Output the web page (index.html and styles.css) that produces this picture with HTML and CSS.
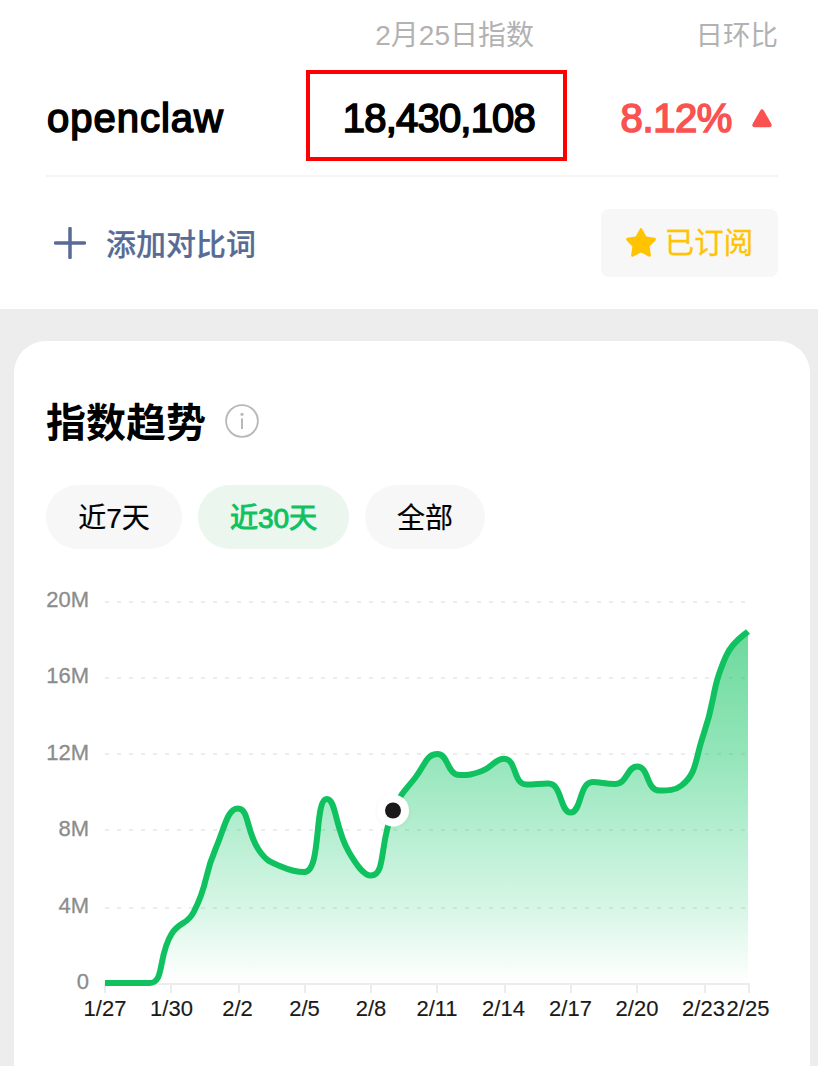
FILE: index.html
```html
<!DOCTYPE html>
<html lang="zh-CN">
<head>
<meta charset="utf-8">
<title>指数趋势</title>
<link rel="stylesheet" href="styles.css">
</head>
<body>
<section class="summary">
  <div class="row labels">
    <span></span>
    <span class="label-index">2月25日指数</span>
    <span class="label-change">日环比</span>
  </div>
  <div class="row values">
    <span class="keyword">openclaw</span>
    <span class="index-value">18,430,108</span>
    <span class="change">8.12%
      <svg class="up" viewBox="0 0 20 19"><path d="M8.1 1.7Q10-1 11.9 1.7L19.2 14.6Q20.700 18.200 17.200 18.200H2.800Q-.7 18.200.8 14.600Z"/></svg>
    </span>
  </div>
  <div class="actions">
    <a class="add">
      <svg class="plus" viewBox="0 0 32 32"><path d="M16 1.500V30.500M1.500 16H30.500"/></svg>
      <span>添加对比词</span>
    </a>
    <button class="subscribed">
      <svg class="star" viewBox="0 0 30 29"><path d="M13.700 1.200Q15-1.200 16.300 1.200L20.300 8.600 28.600 9.800Q30.900 10.400 29.300 12.400L23.600 18.600 24.900 26.900Q24.900 29.300 22.700 28.400L15 24.500 7.300 28.400Q5.100 29.300 5.100 26.900L6.400 18.600.7 12.400Q-.9 10.400 1.400 9.800L9.700 8.600Z"/></svg>
      <span>已订阅</span>
    </button>
  </div>
</section>
<main class="card">
  <div class="title-row">
    <h1>指数趋势</h1>
    <svg class="info" viewBox="0 0 34 34"><circle class="ring" cx="17" cy="17" r="15.900"/><circle class="dot" cx="17" cy="10.300" r="1.600"/><path class="stem" d="M17 14.500V25"/></svg>
  </div>
  <nav class="tabs">
    <button class="tab week">近7天</button>
    <button class="tab month active">近30天</button>
    <button class="tab all">全部</button>
  </nav>
  <svg class="chart" id="chart" viewBox="30 573 764 467">
    <defs>
      <linearGradient id="fade" gradientUnits="userSpaceOnUse" x1="0" y1="632" x2="0" y2="983">
        <stop offset="0" stop-color="#0bc05a" stop-opacity=".6"/>
        <stop offset=".35" stop-color="#0bc460" stop-opacity=".44"/>
        <stop offset=".57" stop-color="#0bc766" stop-opacity=".3"/>
        <stop offset=".79" stop-color="#0bc766" stop-opacity=".16"/>
        <stop offset="1" stop-color="#0bc766" stop-opacity="0"/>
      </linearGradient>
      <filter id="soft" x="-50%" y="-50%" width="200%" height="200%"><feDropShadow dx="0" dy="1" stdDeviation="2" flood-color="#000" flood-opacity=".05"/></filter>
    </defs>
    <g class="grid"><path d="M105 602H748M105 678H748M105 754H748M105 830H748M105 908H748"/></g>
    <path class="axis" d="M104 984H750M105 984V993M171 984V993M239 984V993M305 984V993M371 984V993M437 984V993M505 984V993M571 984V993M637 984V993M705 984V993M749 984V993"/>
    <path class="area" id="area"/>
    <path class="line" id="line"/>
    <circle cx="393" cy="810.500" r="16" fill="#fff" filter="url(#soft)"/>
    <circle cx="393" cy="810.500" r="8" fill="#1a1a1a"/>
    <g class="y-labels">
      <text x="89" y="607">20M</text><text x="89" y="683">16M</text><text x="89" y="760">12M</text>
      <text x="89" y="836">8M</text><text x="89" y="913">4M</text><text x="89" y="989">0</text>
    </g>
    <g class="x-labels">
      <text x="105" y="1016">1/27</text><text x="171.500" y="1016">1/30</text><text x="237.500" y="1016">2/2</text>
      <text x="304.500" y="1016">2/5</text><text x="371" y="1016">2/8</text><text x="437" y="1016">2/11</text>
      <text x="503.500" y="1016">2/14</text><text x="570.500" y="1016">2/17</text><text x="637" y="1016">2/20</text>
      <text x="703.500" y="1016">2/23</text><text x="748" y="1016">2/25</text>
    </g>
  </svg>
</main>
<script src="chart.js"></script>
</body>
</html>
```
FILE: styles.css
```css
* { box-sizing: border-box; }
body {
  margin: 0;
  height: 1066px;
  overflow: hidden;
  display: flex;
  flex-direction: column;
  background: #ededed;
  color: #000;
  font-family: "Liberation Sans", "Noto Sans CJK SC", sans-serif;
}
button { border: 0; padding: 0; font: inherit; }
svg { display: block; flex: none; }
.summary { height: 309px; flex: none; padding: 16px 40px 0 46px; background: #fff; }
.row { display: grid; grid-template-columns: 260px 261px 1fr; }
.labels { height: 54px; line-height: 40px; font-size: 28px; color: #b2b2b2; }
.label-index { text-align: right; padding-right: 33px; white-space: nowrap; }
.label-change { text-align: right; font-size: 27.500px; }
.values { height: 107px; border-bottom: 2px solid #f5f5f5; font-size: 40px; line-height: 97px; -webkit-text-stroke: 1.600px currentColor; }
.keyword { padding-left: 1px; letter-spacing: 1px; }
.index-value { height: 91px; border: 4px solid #f00; line-height: 89px; text-align: right; padding-right: 28px; letter-spacing: -.8px; }
.change { display: flex; align-items: center; justify-content: flex-end; height: 97px; gap: 20px; padding-right: 6px; color: #fa5151; letter-spacing: -.4px; }
.up { width: 20px; height: 19px; fill: #fa5151; }
.up path { stroke: none; }
.actions { display: flex; justify-content: space-between; padding-top: 32px; }
.add { display: flex; align-items: center; height: 68px; padding-left: 8px; gap: 20px; font-size: 30px; font-weight: 500; color: #576b95; }
.add span { padding-bottom: 3px; -webkit-text-stroke: .2px currentColor; }
.plus { width: 32px; height: 32px; fill: none; stroke: #576b95; stroke-width: 3.500; stroke-linecap: round; }
.subscribed { display: flex; align-items: center; justify-content: center; gap: 9px; width: 177px; height: 68px; border-radius: 8px; background: #f7f7f7; color: #ffc300; font-size: 29.500px; }
.subscribed span { padding-bottom: 6px; -webkit-text-stroke: .3px currentColor; }
.star { width: 30px; height: 29px; margin-bottom: 2px; fill: #ffc300; }
.card { flex: none; margin: 32px 8px 0 14px; padding: 50px 16px 0; height: 760px; border-radius: 32px; background: #fff; }
.title-row { display: flex; align-items: center; gap: 19px; height: 60px; padding-left: 16px; }
h1 { margin: 0; padding-top: 4px; font-size: 40px; line-height: 60px; font-weight: 700; }
.info { width: 34px; height: 34px; }
.ring { fill: none; stroke: #b8b8b8; stroke-width: 1.800; }
.dot { fill: #b8b8b8; }
.stem { stroke: #b8b8b8; stroke-width: 2; }
.tabs { display: flex; gap: 16px; padding: 34px 0 0 16px; }
.tab { height: 64px; padding-top: 3px; border-radius: 32px; background: #f7f7f7; color: #000; font-size: 28px; line-height: 61px; -webkit-text-stroke: .2px currentColor; }
.week { width: 136px; }
.month { width: 151px; }
.all { width: 120px; }
.active { background: #eaf6ee; color: #10c160; -webkit-text-stroke: 1px currentColor; }
.chart { width: 764px; height: 467px; margin-top: 24px; }
.grid { fill: none; stroke: #ececec; stroke-width: 2; stroke-dasharray: 4 8; }
.axis { fill: none; stroke: #ececec; stroke-width: 2; }
.area { fill: url(#fade); }
.line { fill: none; stroke: #10c160; stroke-width: 6; stroke-linejoin: bevel; }
.y-labels { font-size: 22px; fill: #8c8c8c; stroke: #8c8c8c; stroke-width: .3; text-anchor: end; }
.x-labels { font-size: 22px; fill: #1a1a1a; stroke: #1a1a1a; stroke-width: .15; text-anchor: middle; }
```
FILE: chart.js
```js
// Vertical position of each daily value, 1/27 through 2/25.
const ys = [983, 983, 983, 934, 912, 848, 808.5, 852, 867, 872, 799, 852, 875.5, 810.5, 777.5,
  754, 775, 771, 758.7, 784.5, 783.5, 812.5, 782, 784, 766.5, 790.5, 785.5, 734, 656.5, 631.5];
const pts = ys.map((y, i) => [105 + i * 643 / 29, y]);

const clamp = (v, a, b) => Math.max(Math.min(a, b), Math.min(Math.max(a, b), v));

// Control points on both sides of a node, kept within its neighbours' range.
function controls(i) {
  const p = pts[i], a = pts[i - 1], b = pts[i + 1];
  if (!a) return [p, p];
  if (!b) return [[p[0] - 5, p[1] + 4.5], p];
  const la = Math.hypot(p[0] - a[0], p[1] - a[1]);
  const lb = Math.hypot(b[0] - p[0], b[1] - p[1]);
  const before = [], after = [];
  for (let k = 0; k < 2; k++) {
    after[k] = clamp(p[k] + (b[k] - a[k]) * 0.5 * lb / (la + lb), p[k], b[k]);
    before[k] = clamp(p[k] - (after[k] - p[k]) * la / lb, a[k], p[k]);
    after[k] = p[k] + (p[k] - before[k]) * lb / la;
  }
  return [before, after];
}

let d = `M${pts[0]}`;
for (let i = 1; i < pts.length; i++) {
  d += `C${controls(i - 1)[1]} ${controls(i)[0]} ${pts[i]}`;
}
document.getElementById('line').setAttribute('d', d);
document.getElementById('area').setAttribute('d', `${d}V983H105Z`);
```
